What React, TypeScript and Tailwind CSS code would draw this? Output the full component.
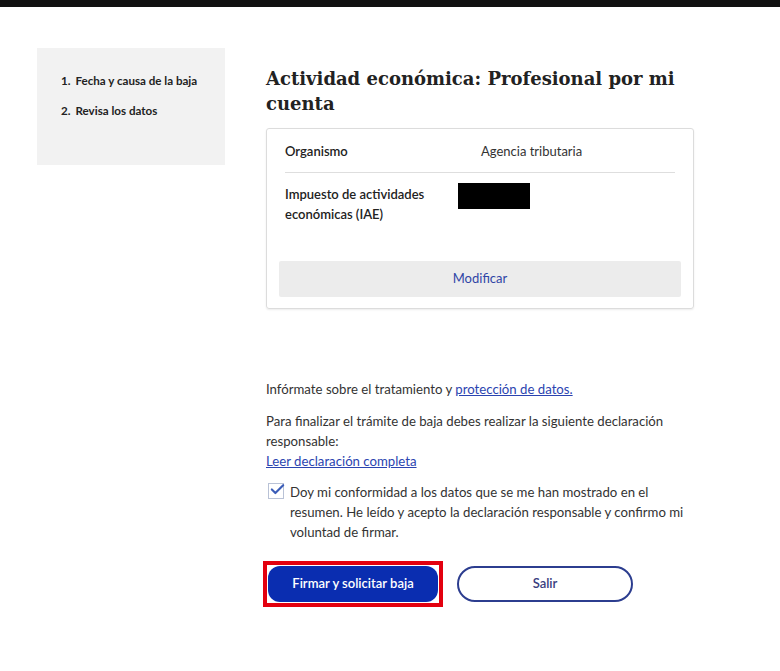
import { Check } from "lucide-react";

const steps = ["Fecha y causa de la baja", "Revisa los datos"];

function Checkbox() {
  return (
    <span className="relative mt-[1px] flex h-[16px] w-[16px] shrink-0 items-center justify-center border border-[#b9c2d6] bg-white">
      <Check className="absolute -top-[3px] left-[0px] h-[17px] w-[17px] text-[#3b5db8]" strokeWidth={3} />
    </span>
  );
}

export default function App() {
  return (
    <div className="min-h-[671px] bg-white font-['Lato','Liberation_Sans',sans-serif] text-[#333]">
      <div className="h-[7px] bg-[#111]" />

      <div className="flex">
        {/* steps sidebar */}
        <aside className="ml-[37px] mt-[41px] h-[117px] w-[188px] shrink-0 bg-[#f2f2f2] pl-[24px] pt-[23px]">
          <ol className="flex flex-col gap-[11px] text-[11.6px] font-bold leading-[19px] text-[#222]">
            {steps.map((s, i) => (
              <li key={s} className="flex gap-[5px]">
                <span>{i + 1}.</span>
                <span>{s}</span>
              </li>
            ))}
          </ol>
        </aside>

        <main className="ml-[41px] w-[428px]">
          <h1 className="mt-[59px] font-['DejaVu_Serif',serif] text-[18px] font-bold leading-[25px] text-[#222]">
            Actividad económica: Profesional por mi cuenta
          </h1>

          <div className="mt-[12px] rounded-[3px] border border-[#dcdcdc] px-[12px] pb-[11px] pt-[12px] shadow-[0_1px_2px_rgba(0,0,0,0.08)]">
            <div className="px-[6px]">
              <div className="grid grid-cols-[173px_1fr] border-b border-[#dedede] pb-[11px] text-[13px] leading-[20px]">
                <span className="font-semibold text-[#222]">Organismo</span>
                <span className="pl-[23px]">Agencia tributaria</span>
              </div>
              <div className="grid grid-cols-[173px_1fr] pt-[11px] text-[13px] leading-[20px]">
                <span className="font-semibold text-[#222]">
                  Impuesto de actividades económicas (IAE)
                </span>
                <span className="mt-[-1px] h-[26px] w-[72px] bg-black" />
              </div>
            </div>
            <button className="mt-[37px] flex h-[36px] w-full items-center justify-center rounded-[2px] bg-[#ececec] text-[13px] text-[#2f45a6]">
              Modificar
            </button>
          </div>

          <p className="mt-[70px] text-[13.2px] leading-[20px]">
            Infórmate sobre el tratamiento y{" "}
            <a className="text-[#2b44b0] underline">protección de datos.</a>
          </p>

          <p className="mt-[12px] text-[13.2px] leading-[20px]">
            Para finalizar el trámite de baja debes realizar la siguiente declaración responsable:
            <br />
            <a className="text-[#2b44b0] underline">Leer declaración completa</a>
          </p>

          <label className="mt-[11px] flex gap-[6px] pl-[2px] text-[13.2px] leading-[20px]">
            <Checkbox />
            <span>
              Doy mi conformidad a los datos que se me han mostrado en el resumen. He leído y acepto
              la declaración responsable y confirmo mi voluntad de firmar.
            </span>
          </label>

          <div className="ml-[-3px] mt-[19px] flex items-center gap-[14px]">
            <div className="border-[4px] border-[#e3000f] p-[1px]">
              <button className="h-[36px] w-[170px] rounded-[12px] bg-[#0a2db0] text-[13px] font-semibold text-white">
                Firmar y solicitar baja
              </button>
            </div>
            <button className="h-[36px] w-[176px] rounded-full border-2 border-[#2c3d8f] text-[13px] font-semibold text-[#3a4080]">
              Salir
            </button>
          </div>
        </main>
      </div>
    </div>
  );
}
